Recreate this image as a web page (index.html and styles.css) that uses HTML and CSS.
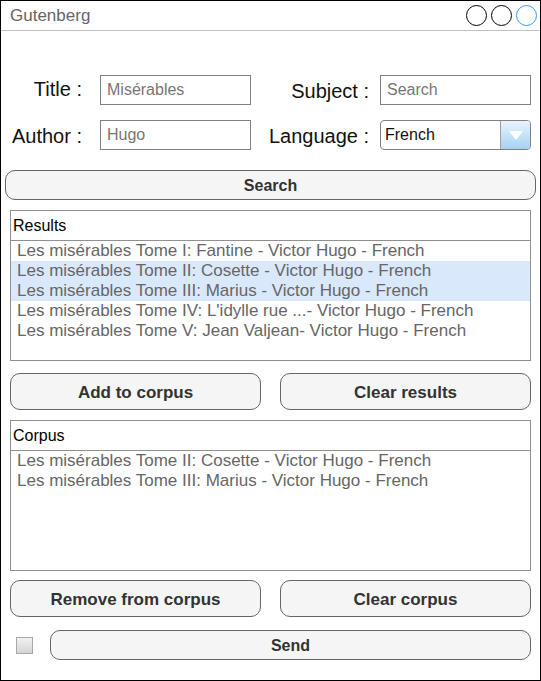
FILE: index.html
```html
<!DOCTYPE html>
<html>
<head>
<meta charset="utf-8">
<link rel="stylesheet" href="styles.css">
</head>
<body>
<div class="window">
  <div class="titlebar">
    <span class="title">Gutenberg</span>
    <div class="controls">
      <span class="dot"></span><span class="dot"></span><span class="dot dot-active"></span>
    </div>
  </div>
  <div class="form">
    <span class="lbl lbl-left">Title :</span>
    <div class="input placeholder">Misérables</div>
    <span class="lbl lbl-right lbl-low">Subject :</span>
    <div class="input placeholder">Search</div>
    <span class="lbl lbl-left lbl-low">Author :</span>
    <div class="input placeholder">Hugo</div>
    <span class="lbl lbl-right lbl-low">Language :</span>
    <div class="select">
      <span class="select-value">French</span>
      <span class="select-btn"><svg width="14" height="9" viewBox="0 0 14 9"><polygon points="0,0 14,0 7,9" fill="#fff"/></svg></span>
    </div>
  </div>
  <div class="search-row"><button class="btn">Search</button></div>
  <div class="content">
    <div class="panel">
      <div class="panel-head">Results</div>
      <ul class="list">
        <li>Les misérables Tome I: Fantine - Victor Hugo - French</li>
        <li class="selected">Les misérables Tome II: Cosette - Victor Hugo - French</li>
        <li class="selected">Les misérables Tome III: Marius - Victor Hugo - French</li>
        <li>Les misérables Tome IV: L'idylle rue ...- Victor Hugo - French</li>
        <li>Les misérables Tome V: Jean Valjean- Victor Hugo - French</li>
      </ul>
    </div>
    <div class="btn-row">
      <button class="btn btn-tall">Add to corpus</button>
      <button class="btn btn-tall">Clear results</button>
    </div>
    <div class="panel">
      <div class="panel-head">Corpus</div>
      <ul class="list">
        <li>Les misérables Tome II: Cosette - Victor Hugo - French</li>
        <li>Les misérables Tome III: Marius - Victor Hugo - French</li>
      </ul>
    </div>
    <div class="btn-row btn-row-bottom">
      <button class="btn btn-tall">Remove from corpus</button>
      <button class="btn btn-tall">Clear corpus</button>
    </div>
    <div class="send-row">
      <span class="checkbox"></span>
      <button class="btn send">Send</button>
    </div>
  </div>
</div>
</body>
</html>
```
FILE: styles.css
```css
* { box-sizing: border-box; }
html, body { margin: 0; padding: 0; background: #fff; }
body { font-family: "Liberation Sans", Arial, sans-serif; }

.window {
  width: 541px;
  height: 681px;
  border: 1px solid #000;
  background: #fff;
}

.titlebar {
  height: 30px;
  border-bottom: 1px solid #c0c0c0;
  display: flex;
  align-items: center;
  justify-content: space-between;
  padding: 1px 3px 0 9px;
}
.title { font-size: 17px; color: #666; }
.controls { display: flex; gap: 4px; margin-top: -1px; }
.dot {
  width: 21px; height: 21px;
  border: 1px solid #000;
  border-radius: 50%;
}
.dot-active { border-color: #3399ff; }

.form {
  display: grid;
  grid-template-columns: 99px 151px 129px 151px;
  row-gap: 15px;
  padding-top: 44px;
  align-items: center;
}
.lbl {
  font-size: 20px;
  color: #111;
  text-align: right;
  white-space: nowrap;
  margin-top: -1px;
}
.lbl-low { margin-top: 2px; }
.lbl-left { padding-right: 18px; }
.lbl-right { padding-right: 11px; }
.input {
  height: 30px;
  border: 1px solid #808080;
  font-size: 16px;
  line-height: 28px;
  padding-left: 6px;
  color: #000;
}
.placeholder { color: #777; }

.select {
  height: 30px;
  border: 1px solid #808080;
  border-radius: 4px;
  display: flex;
  overflow: hidden;
}
.select-value {
  flex: 1;
  font-size: 16px;
  line-height: 28px;
  padding-left: 4px;
  color: #111;
}
.select-btn {
  width: 30px;
  border-left: 1px solid #a0a0a0;
  background: linear-gradient(#eaf4fd, #a5d1f5);
  display: flex;
  align-items: center;
  justify-content: center;
}

.search-row { padding: 20px 4px 0 4px; }

.btn {
  display: block;
  width: 100%;
  height: 30px;
  background: #f5f5f5;
  border: 1px solid #666;
  border-radius: 10px;
  font-family: "Liberation Sans", Arial, sans-serif;
  font-weight: bold;
  font-size: 16px;
  color: #333;
  padding: 2px 0 0 0;
}
.btn-tall { height: 37px; font-size: 17px; }

.content { padding: 10px 9px 0 9px; }

.panel {
  height: 151px;
  border: 1px solid #909090;
}
.panel-head {
  height: 30px;
  border-bottom: 1px solid #909090;
  font-size: 16px;
  line-height: 29px;
  color: #000;
  padding-left: 2px;
}
.list { list-style: none; margin: 0; padding: 0; }
.list li {
  height: 20px;
  font-size: 17px;
  line-height: 19px;
  color: #666;
  padding-left: 6px;
  white-space: nowrap;
}
.list li.selected { background: #dae8fc; }

.btn-row {
  display: grid;
  grid-template-columns: 1fr 1fr;
  column-gap: 19px;
  margin: 12px 0 10px 0;
}
.btn-row-bottom { margin: 9px 0 13px 0; }

.send-row {
  display: flex;
  align-items: center;
  gap: 17px;
  padding-left: 6px;
}
.checkbox {
  width: 17px; height: 17px;
  border: 1px solid #a8a8a8;
  background: linear-gradient(#f2f2f2, #d4d4d4);
  flex: none;
}
.send { flex: 1; width: auto; }
```
